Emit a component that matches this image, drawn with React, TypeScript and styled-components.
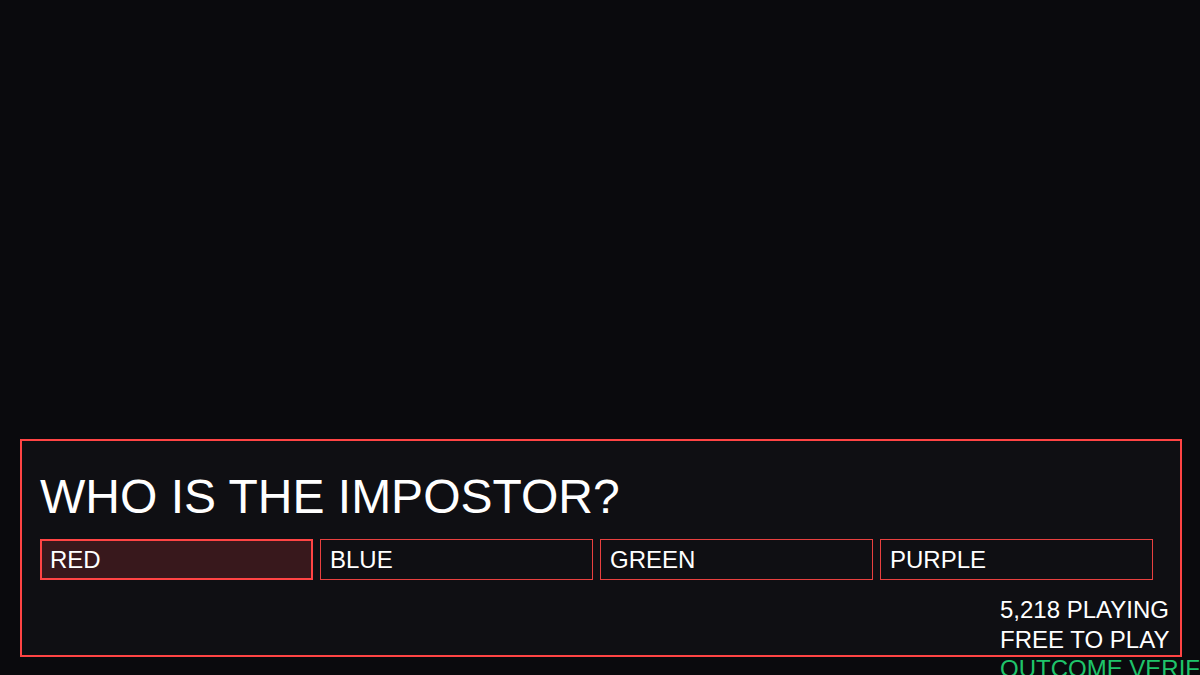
import React from 'react';
import styled, { createGlobalStyle } from 'styled-components';

const GlobalStyle = createGlobalStyle`
    html, body {
        margin: 0;
        padding: 0;
        background-color: #0a0a0d;
        font-family: "Liberation Sans", Arial, sans-serif;
        color: #ffffff;
    }
`;

const Screen = styled.div`
    width: 100%;
    height: 675px;
    display: flex;
    flex-direction: column;
    justify-content: flex-end;
    padding: 0 18px 18px 20px;
    box-sizing: border-box;
    overflow: hidden;
`;

const Panel = styled.div`
    height: 218px;
    box-sizing: border-box;
    border: 2px solid #ff4444;
    background-color: #0f0f13;
    padding: 28px 18px 0 18px;
    display: flex;
    flex-direction: column;
`;

const Question = styled.h1`
    margin: 0;
    font-size: 48px;
    font-weight: 400;
    line-height: 55px;
    color: #ffffff;
`;

const Options = styled.div`
    display: grid;
    grid-template-columns: repeat(4, 273px);
    column-gap: 7px;
    margin-top: 15px;
`;

const Option = styled.button<{ $selected?: boolean }>`
    height: 41px;
    box-sizing: border-box;
    border: ${p => (p.$selected ? '2px solid #ff4444' : '1px solid #e8403f')};
    background-color: ${p => (p.$selected ? '#38181c' : '#0f0f13')};
    color: #ffffff;
    font-family: "Liberation Sans", Arial, sans-serif;
    font-size: 24px;
    text-align: left;
    padding: 0 0 0 ${p => (p.$selected ? '8px' : '9px')};
    margin: 0;
    cursor: pointer;
`;

const Stats = styled.div`
    align-self: flex-end;
    width: 162px;
    margin-top: 15px;
    white-space: nowrap;
    font-size: 24px;
    line-height: 29.5px;
`;

const Stat = styled.div<{ $accent?: boolean }>`
    color: ${p => (p.$accent ? '#1fc46a' : '#ffffff')};
`;

const App: React.FC = () => {
    const choices = ['RED', 'BLUE', 'GREEN', 'PURPLE'];

    return (
        <>
            <GlobalStyle />
            <Screen>
                <Panel>
                    <Question>WHO IS THE IMPOSTOR?</Question>
                    <Options>
                        {choices.map(c => (
                            <Option key={c} $selected={c === 'RED'}>{c}</Option>
                        ))}
                    </Options>
                    <Stats>
                        <Stat>5,218 PLAYING</Stat>
                        <Stat>FREE TO PLAY</Stat>
                        <Stat $accent>OUTCOME VERIFIED</Stat>
                    </Stats>
                </Panel>
            </Screen>
        </>
    );
};

export default App;
